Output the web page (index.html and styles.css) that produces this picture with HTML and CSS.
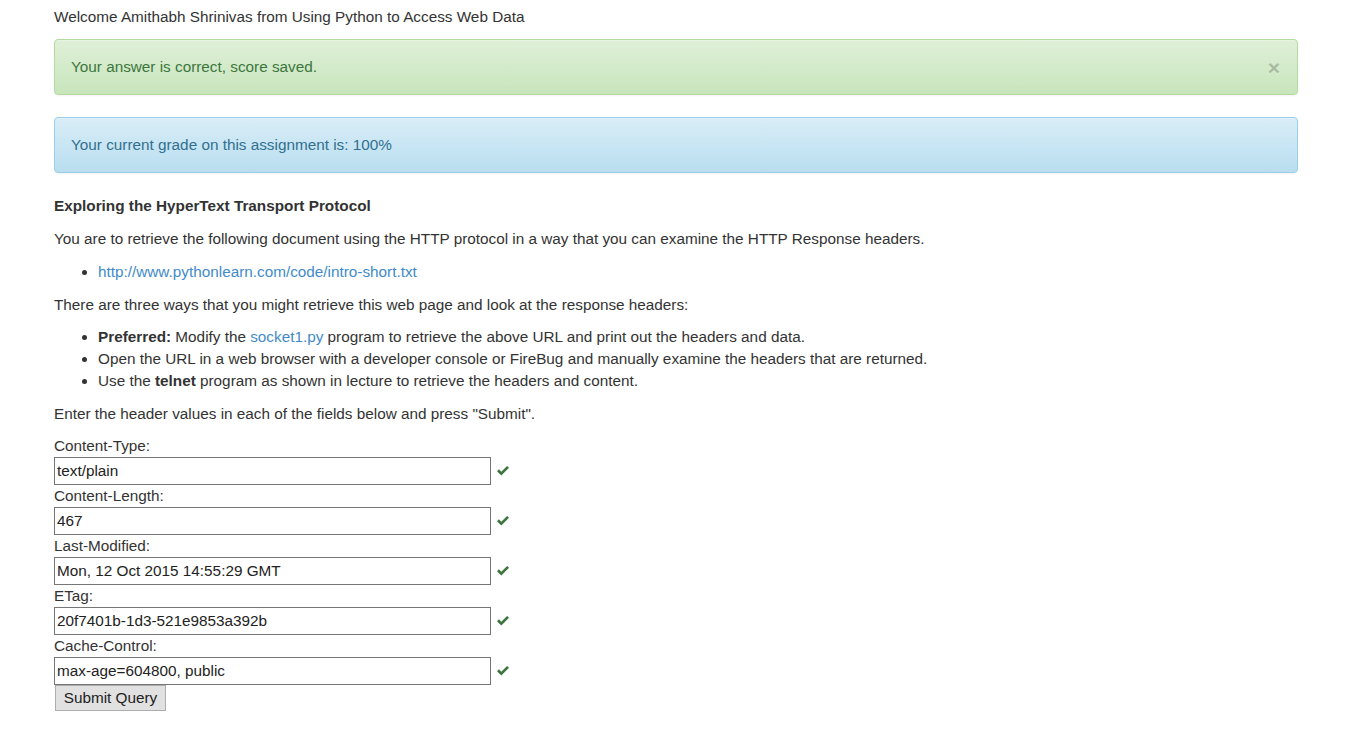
FILE: index.html
```html
<!DOCTYPE html>
<html>
<head>
<meta charset="utf-8">
<title>Exploring the HyperText Transport Protocol</title>
<link rel="stylesheet" href="styles.css">
</head>
<body>
<div class="container">
  <p class="welcome">Welcome Amithabh Shrinivas from Using Python to Access Web Data</p>
  <div class="alert alert-success">
    <span>Your answer is correct, score saved.</span>
    <span class="close">&times;</span>
  </div>
  <div class="alert alert-info">
    <span>Your current grade on this assignment is: 100%</span>
  </div>
  <p class="heading"><b>Exploring the HyperText Transport Protocol</b></p>
  <p>You are to retrieve the following document using the HTTP protocol in a way that you can examine the HTTP Response headers.</p>
  <ul>
    <li><a href="#">http://www.pythonlearn.com/code/intro-short.txt</a></li>
  </ul>
  <p class="tight">There are three ways that you might retrieve this web page and look at the response headers:</p>
  <ul>
    <li><b>Preferred:</b> Modify the <a href="#">socket1.py</a> program to retrieve the above URL and print out the headers and data.</li>
    <li>Open the URL in a web browser with a developer console or FireBug and manually examine the headers that are returned.</li>
    <li>Use the <b>telnet</b> program as shown in lecture to retrieve the headers and content.</li>
  </ul>
  <p>Enter the header values in each of the fields below and press "Submit".</p>
  <form class="fields">
    <div class="field">
      <div class="label">Content-Type:</div>
      <div class="row"><input type="text" value="text/plain"><svg class="ok" viewBox="0 0 14 12"><path d="M1 6.2 L2.9 4.3 L5.3 6.7 L11.1 0.9 L13 2.8 L5.3 10.5 Z"/></svg></div>
    </div>
    <div class="field">
      <div class="label">Content-Length:</div>
      <div class="row"><input type="text" value="467"><svg class="ok" viewBox="0 0 14 12"><path d="M1 6.2 L2.9 4.3 L5.3 6.7 L11.1 0.9 L13 2.8 L5.3 10.5 Z"/></svg></div>
    </div>
    <div class="field">
      <div class="label">Last-Modified:</div>
      <div class="row"><input type="text" value="Mon, 12 Oct 2015 14:55:29 GMT"><svg class="ok" viewBox="0 0 14 12"><path d="M1 6.2 L2.9 4.3 L5.3 6.7 L11.1 0.9 L13 2.8 L5.3 10.5 Z"/></svg></div>
    </div>
    <div class="field">
      <div class="label">ETag:</div>
      <div class="row"><input type="text" value="20f7401b-1d3-521e9853a392b"><svg class="ok" viewBox="0 0 14 12"><path d="M1 6.2 L2.9 4.3 L5.3 6.7 L11.1 0.9 L13 2.8 L5.3 10.5 Z"/></svg></div>
    </div>
    <div class="field last">
      <div class="label">Cache-Control:</div>
      <div class="row"><input type="text" value="max-age=604800, public"><svg class="ok" viewBox="0 0 14 12"><path d="M1 6.2 L2.9 4.3 L5.3 6.7 L11.1 0.9 L13 2.8 L5.3 10.5 Z"/></svg></div>
    </div>
    <button type="button" class="submit">Submit Query</button>
  </form>
</div>
</body>
</html>
```

FILE: styles.css
```css
html, body {
  margin: 0;
  padding: 0;
  background: #fff;
}
body {
  font-family: "Liberation Sans", Arial, sans-serif;
  font-size: 15.3px;
  line-height: 22px;
  color: #333;
}
.container {
  padding: 6px 52px 20px 54px;
}
p {
  margin: 0 0 11px 0;
}
p.tight {
  margin-bottom: 10px;
}
a {
  color: #428bca;
  text-decoration: none;
}
.alert {
  display: flex;
  justify-content: space-between;
  align-items: center;
  padding: 16px;
  border: 1px solid;
  border-radius: 4px;
  margin-bottom: 22px;
  box-shadow: inset 0 1px 0 rgba(255,255,255,.25), 0 1px 2px rgba(0,0,0,.05);
}
.alert-success {
  color: #3c763d;
  background: linear-gradient(to bottom, #dff0d8 0%, #c8e5bc 100%);
  border-color: #b2dba1;
}
.alert-info {
  color: #31708f;
  background: linear-gradient(to bottom, #d9edf7 0%, #b9def0 100%);
  border-color: #9acfea;
}
.close {
  font-size: 21px;
  font-weight: bold;
  line-height: 1;
  color: #000;
  opacity: .2;
  text-shadow: 0 1px 0 #fff;
  margin-right: 1px;
}
ul {
  margin: 0 0 11px 0;
  padding-left: 44px;
}
.fields {
  display: flex;
  flex-direction: column;
  align-items: flex-start;
}
.field {
  display: flex;
  flex-direction: column;
  margin-bottom: 1px;
}
.field.last {
  margin-bottom: 0;
}
.label {
  height: 21px;
  line-height: 20px;
}
.row {
  display: flex;
  align-items: center;
}
input[type="text"] {
  box-sizing: border-box;
  width: 437px;
  height: 28px;
  margin: 0;
  padding: 1px 2px;
  border: 1px solid #767676;
  border-radius: 0;
  font-family: "Liberation Sans", Arial, sans-serif;
  font-size: 15.3px;
  color: #222;
  background: #fff;
}
.ok {
  width: 14px;
  height: 12px;
  margin-left: 5px;
  fill: #3c763d;
}
.submit {
  box-sizing: border-box;
  margin: 0 0 0 1px;
  width: 111px;
  height: 26px;
  padding: 0 6px;
  border: 1px solid #adadad;
  background: #e1e1e1;
  border-radius: 0;
  font-family: "Liberation Sans", Arial, sans-serif;
  font-size: 15.3px;
  color: #222;
}
```
